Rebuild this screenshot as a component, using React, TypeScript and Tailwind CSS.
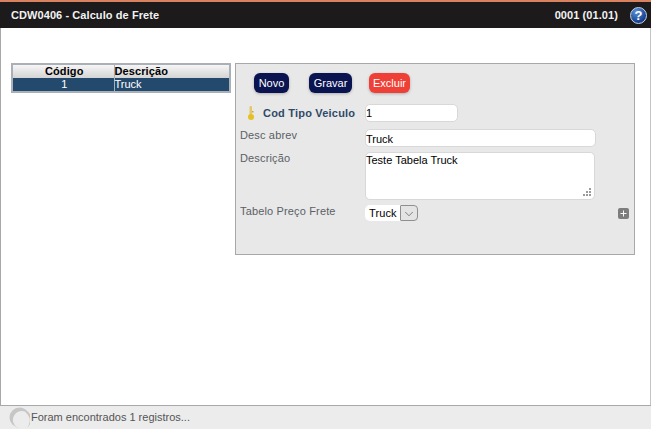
import { ChevronDown, Plus } from 'lucide-react';

const labelClass = 'w-[125px] shrink-0 text-[11px] leading-[13px] tracking-[0.15px] text-[#5a5f66]';
const fieldClass = 'rounded-[5px] border border-[#d8d8d8] bg-white text-[11px] text-black';

function KeyIcon() {
  return (
    <svg width="10" height="16" viewBox="0 0 10 16" className="shrink-0">
      <rect x="3.5" y="1" width="2.5" height="9" rx="1" fill="#e3c86a" />
      <circle cx="5" cy="12" r="3" fill="#e6c020" />
      <rect x="6" y="6" width="1.5" height="1.5" fill="#c9a82a" />
    </svg>
  );
}

function HelpIcon() {
  return (
    <div className="flex h-[17px] w-[17px] items-center justify-center rounded-full border border-[#c8d4e6] bg-[radial-gradient(circle_at_35%_25%,#5f93da,#14408f_70%)] font-['Liberation_Sans',sans-serif] text-[13px] font-bold leading-none text-white">
      ?
    </div>
  );
}

function Spinner() {
  return (
    <svg width="21" height="21" viewBox="0 0 21 21" className="shrink-0">
      <path
        fillRule="evenodd"
        d="M10.5 0.5 A10 10 0 1 0 10.5 20.5 L18 20.5 A10 10 0 0 0 18 4 A10 10 0 0 0 10.5 0.5 Z M16 4.5 A9 9 0 0 0 8 20.5 L18 20.5 A10 10 0 0 0 19 8 Z"
        fill="#c6c6c6"
      />
    </svg>
  );
}

export default function App() {
  return (
    <div className="flex h-[429px] w-[651px] flex-col overflow-hidden bg-white font-['Liberation_Sans',Arial,sans-serif]">
      <header className="flex h-[28px] shrink-0 items-center justify-between border-t-2 border-[#d9825f] bg-[#1c1a1a] pl-[11px] pr-[4px] text-[11px] font-bold tracking-[0.08px] text-[#f2f2f2]">
        <span>CDW0406 - Calculo de Frete</span>
        <div className="flex items-center gap-[12px]">
          <span>0001 (01.01)</span>
          <HelpIcon />
        </div>
      </header>

      <main className="flex min-h-0 flex-1 items-start gap-[4px] border-x border-l-[#a8a8a8] border-r-[#c4c4c4] pl-[10px] pt-[35px]">
        <table className="w-[220px] table-fixed border-collapse border-2 border-[#a9b0b8] text-[11px] leading-[13px]">
          <thead>
            <tr className="h-[13px] bg-gradient-to-b from-[#f8f8f8] to-[#d4d4d4] text-black">
              <th className="w-[102px] border-r border-[#a9b0b8] p-0 pl-[2px] text-center font-bold tracking-[0.1px]">Código</th>
              <th className="p-0 text-left font-bold tracking-[0.1px]">Descrição</th>
            </tr>
          </thead>
          <tbody>
            <tr className="h-[13px] bg-[#234a6d] text-white">
              <td className="border-r border-[#a9b0b8] p-0 pl-[2px] text-center">1</td>
              <td className="p-0">Truck</td>
            </tr>
          </tbody>
        </table>

        <section className="flex h-[192px] w-[400px] flex-col border border-[#a8a8a8] bg-[#e8e8e8]">
          <div className="ml-[18px] mt-[9px] flex gap-[20px] text-[11px] text-white">
            <button type="button" className="h-[20px] w-[35px] rounded-[6px] bg-[#0a1450] shadow-[0_1px_3px_rgba(0,0,0,0.25)]">Novo</button>
            <button type="button" className="h-[20px] w-[43px] rounded-[6px] bg-[#0a1450] shadow-[0_1px_3px_rgba(0,0,0,0.25)]">Gravar</button>
            <button type="button" className="-ml-[3px] h-[20px] w-[41px] rounded-[6px] bg-[#ef4038] shadow-[0_1px_3px_rgba(0,0,0,0.25)]">Excluir</button>
          </div>

          <div className="ml-[10px] mt-[11px] flex h-[18px] items-center gap-[7px]">
            <KeyIcon />
            <span className="w-[95px] shrink-0 whitespace-nowrap text-[11px] font-bold tracking-[0.2px] text-[#2f4a68]">Cod Tipo Veiculo</span>
            <div className={`${fieldClass} h-[18px] w-[93px] leading-[16px]`}>1</div>
          </div>

          <div className="ml-[4px] mt-[7px] flex">
            <span className={labelClass}>Desc abrev</span>
            <div className={`${fieldClass} h-[18px] w-[231px] leading-[18px]`}>Truck</div>
          </div>

          <div className="ml-[4px] mt-[5px] flex">
            <span className={labelClass}>Descrição</span>
            <div className={`${fieldClass} relative h-[48px] w-[230px] leading-[14px]`}>
              Teste Tabela Truck
              <svg width="9" height="9" viewBox="0 0 9 9" className="absolute bottom-[2px] right-[2px] fill-[#9a9a9a]">
                <rect x="6" y="0" width="2" height="2" />
                <rect x="3" y="3" width="2" height="2" />
                <rect x="6" y="3" width="2" height="2" />
                <rect x="0" y="6" width="2" height="2" />
                <rect x="3" y="6" width="2" height="2" />
                <rect x="6" y="6" width="2" height="2" />
              </svg>
            </div>
          </div>

          <div className="ml-[4px] mt-[5px] flex">
            <span className={labelClass}>Tabelo Preço Frete</span>
            <div className="flex h-[16px] w-[53px] items-center justify-between rounded-[5px] bg-white pl-[4px] text-[11px] tracking-[0.1px] text-black">
              Truck
              <div className="flex h-[16px] w-[18px] items-center justify-center rounded-r-[4px] rounded-l-[1px] border border-[#8f8f8f] bg-[#e4e4e4]">
                <ChevronDown size={14} strokeWidth={1} className="mt-[2px] text-[#334]" />
              </div>
            </div>
            <div className="ml-[200px] mt-[3px] flex h-[11px] w-[11px] items-center justify-center rounded-[2px] bg-[#7d7d7d]">
              <Plus size={9} strokeWidth={2.5} className="text-white" />
            </div>
          </div>
        </section>
      </main>

      <footer className="flex h-[24px] shrink-0 items-center gap-[1px] border-t border-[#a8a8a8] bg-[#ececec] pl-[9px] text-[11px] text-[#555]">
        <Spinner />
        <span>Foram encontrados 1 registros...</span>
      </footer>
    </div>
  );
}
